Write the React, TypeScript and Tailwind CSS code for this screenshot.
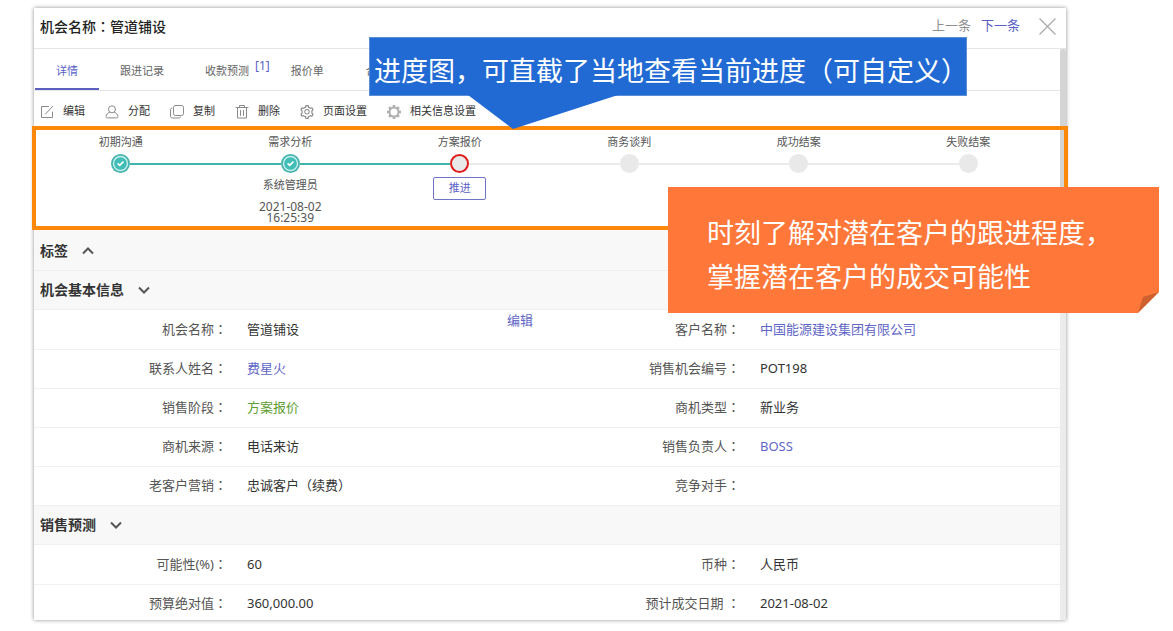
import type { ReactNode } from 'react'
import { useState } from 'react'
import { clsx } from 'clsx'
import { AiOutlineSetting } from 'react-icons/ai'

type Tone = 'text' | 'link' | 'stage'

interface Field {
  label: string
  value?: string
  tone?: Tone
}

interface Step {
  name: string
  state: 'done' | 'current' | 'todo'
  owner?: string
  date?: string
  time?: string
}

const tabs = [
  { name: '详情' },
  { name: '跟进记录' },
  { name: '收款预测', count: 1 },
  { name: '报价单' },
  { name: '合同' },
]

const steps: Step[] = [
  { name: '初期沟通', state: 'done' },
  { name: '需求分析', state: 'done', owner: '系统管理员', date: '2021-08-02', time: '16:25:39' },
  { name: '方案报价', state: 'current' },
  { name: '商务谈判', state: 'todo' },
  { name: '成功结案', state: 'todo' },
  { name: '失败结案', state: 'todo' },
]

const basicInfo: Field[][] = [
  [
    { label: '机会名称', value: '管道铺设' },
    { label: '客户名称', value: '中国能源建设集团有限公司', tone: 'link' },
  ],
  [
    { label: '联系人姓名', value: '费星火', tone: 'link' },
    { label: '销售机会编号', value: 'POT198' },
  ],
  [
    { label: '销售阶段', value: '方案报价', tone: 'stage' },
    { label: '商机类型', value: '新业务' },
  ],
  [
    { label: '商机来源', value: '电话来访' },
    { label: '销售负责人', value: 'BOSS', tone: 'link' },
  ],
  [{ label: '老客户营销', value: '忠诚客户（续费）' }, { label: '竞争对手' }],
]

const forecast: Field[][] = [
  [
    { label: '可能性(%)', value: '60' },
    { label: '币种', value: '人民币' },
  ],
  [
    { label: '预算绝对值', value: '360,000.00' },
    { label: '预计成交日期 ', value: '2021-08-02' },
  ],
]

function Icon({ children }: { children: ReactNode }) {
  return (
    <svg
      viewBox="0 0 14 14"
      className="h-3.5 w-3.5 shrink-0 overflow-visible text-[#8a8a8a]"
      fill="none"
      stroke="currentColor"
      strokeLinecap="round"
      strokeLinejoin="round"
      aria-hidden="true"
    >
      {children}
    </svg>
  )
}

const tools = [
  {
    name: '编辑',
    icon: (
      <Icon>
        <path d="M8.5 1.5h-7v11h11V7M5.5 9l7-7.500" />
      </Icon>
    ),
  },
  {
    name: '分配',
    icon: (
      <Icon>
        <circle cx="7" cy="4.300" r="3.500" />
        <path d="M4.600 7.200C2.500 8 1.300 9.600 1.100 11.500c-.1 1 .3 1.400 1.300 1.400h9.200c1 0 1.400-.4 1.300-1.400-.2-1.900-1.400-3.500-3.500-4.300" />
      </Icon>
    ),
  },
  {
    name: '复制',
    icon: (
      <Icon>
        <rect x="3.500" y=".5" width="10" height="10" rx="2" />
        <path d="M2 3C1 3.200.5 3.800.5 4.700v6.300c0 1.200.8 2 2 2h6.300c1 0 1.600-.4 1.800-1.100" />
      </Icon>
    ),
  },
  {
    name: '删除',
    icon: (
      <Icon>
        <path d="M1 2.500h12M4.500 2.500V.5h5v2M2.500 3v10h9V3M5.500 5.500v5M8.500 5.500v5" />
      </Icon>
    ),
  },
  {
    name: '页面设置',
    icon: <AiOutlineSetting className="-mx-px h-4 w-4 shrink-0 text-[#858585]" />,
  },
  {
    name: '相关信息设置',
    icon: (
      <svg viewBox="0 0 14 14" className="h-3.5 w-3.5 shrink-0 overflow-visible text-[#b0b0b0]" aria-hidden="true">
        <circle cx="7" cy="7" r="4.500" fill="none" stroke="currentColor" strokeWidth="2" />
        {[0, 45, 90, 135, 180, 225, 270, 315].map((a) => (
          <rect key={a} x="5.700" y="0" width="2.600" height="2.600" fill="currentColor" transform={`rotate(${a} 7 7)`} />
        ))}
      </svg>
    ),
  },
]

// Full-width colon set from the TC face, which centres it in its cell
function Colon() {
  return <span className="font-['Noto_Sans_CJK_TC',sans-serif]">：</span>
}

function StepDot({ state }: { state: Step['state'] }) {
  if (state === 'done') {
    return (
      <svg viewBox="0 0 19 19" className="h-[19px] w-[19px] shrink-0" aria-hidden="true">
        <circle cx="9.500" cy="9.500" r="9.500" fill="#45b5ae" />
        <circle cx="9.500" cy="9.500" r="7" fill="#3fbdb6" stroke="#c9efec" strokeWidth="1.400" />
        <path d="M6.600 9.400l2.100 2 3.700-3.800" fill="none" stroke="#fff" strokeWidth="1.600" />
      </svg>
    )
  }
  return (
    <span
      className={clsx(
        'h-[19px] w-[19px] shrink-0 rounded-full bg-[#e9e9e9]',
        state === 'current' && 'border-2 border-[#e01b1b]',
      )}
    />
  )
}

function Progress() {
  return (
    <section className="relative z-10 -mr-2 -ml-0.5 border-4 border-[#fb8808] pr-[11px]">
      <ol className="grid h-24 grid-cols-6 text-[11px] text-[#555]">
        {steps.map((step, i) => (
          <li key={step.name} className="flex flex-col items-center pt-1">
            <span className="leading-4">{step.name}</span>
            <div className="mt-1 flex w-full items-center">
              <span
                className={clsx(
                  'h-0.5 flex-1',
                  i === 0 ? 'bg-transparent' : step.state === 'todo' ? 'bg-[#ebebeb]' : 'bg-[#3fb5ae]',
                )}
              />
              <StepDot state={step.state} />
              <span
                className={clsx(
                  'h-0.5 flex-1',
                  i === steps.length - 1 ? 'bg-transparent' : step.state === 'done' ? 'bg-[#3fb5ae]' : 'bg-[#ebebeb]',
                )}
              />
            </div>
            {step.owner && <span className="mt-1 leading-4">{step.owner}</span>}
            {step.date && (
              <time className="mt-2 text-center text-xs leading-[11px]">
                {step.date}
                <br />
                {step.time}
              </time>
            )}
            {step.state === 'current' && (
              <button className="mt-1 h-[23px] w-[53px] rounded-xs border border-[#6f74c9] text-[#5a5fc8]">推进</button>
            )}
          </li>
        ))}
      </ol>
    </section>
  )
}

function SectionHeader({ title, open, onToggle }: { title: string; open: boolean; onToggle: () => void }) {
  return (
    <h2 className="border-b border-[#efefef] bg-[#f8f8f8] text-sm font-bold text-[#333]">
      <button onClick={onToggle} aria-expanded={open} className="flex h-[38px] w-full items-center gap-3.5 px-1.5 text-left">
        {title}
        <svg viewBox="0 0 12 12" className="h-3 w-3" fill="none" stroke="#555" strokeWidth="2" aria-hidden="true">
          <path d={open ? 'M1 3.500l5 5 5-5' : 'M1 8.500l5-5 5 5'} />
        </svg>
      </button>
    </h2>
  )
}

function FieldValue({ field }: { field: Field }) {
  if (field.tone === 'link') {
    return (
      <a href="#" className="text-[#5f66c6]">
        {field.value}
      </a>
    )
  }
  return <span className={field.tone === 'stage' ? 'text-[#5f9e32]' : 'text-[#333]'}>{field.value}</span>
}

function FieldRows({ rows, editable }: { rows: Field[][]; editable?: boolean }) {
  return (
    <dl className="text-[13px] leading-5">
      {rows.map((row, i) => (
        <div key={i} className="grid h-[39px] grid-cols-2 border-b border-[#f1f1f1] pb-0.5 first:h-10">
          {row.map((field, j) => (
            <div key={field.label} className="flex items-center">
              <dt className="w-[193px] shrink-0 text-right whitespace-pre text-[#555]">
                {field.label}
                <Colon />
              </dt>
              <dd className="ml-5 flex-1">
                <FieldValue field={field} />
              </dd>
              {editable && i === 0 && j === 0 && (
                <button className="mr-3.5 self-start text-[#5f66c6]">编辑</button>
              )}
            </div>
          ))}
        </div>
      ))}
    </dl>
  )
}

function BlueCallout() {
  return (
    <div className="absolute top-[37px] left-[369px] z-20 border border-[#5b8fd6] bg-[#216ad4] pt-2 pr-2 pl-1 text-[27px] leading-[49px] whitespace-nowrap text-white">
      <div className="w-[584px]">进度图，可直截了当地查看当前进度（可自定义）</div>
      <svg viewBox="0 0 150 34" className="absolute top-full left-[98px] h-[34px] w-[150px]" aria-hidden="true">
        <path d="M0 0h150L45 34z" fill="#216ad4" />
      </svg>
    </div>
  )
}

function OrangeCallout() {
  return (
    <div className="absolute top-[187px] left-[668px] z-20 w-[491px] bg-[#ff7739] pt-6 pb-3.5 pl-[39px] text-[27px] leading-[44px] whitespace-nowrap text-white [clip-path:polygon(0_0,100%_0,100%_calc(100%-21px),calc(100%-21px)_100%,0_100%)]">
      <p>时刻了解对潜在客户的跟进程度，</p>
      <p>掌握潜在客户的成交可能性</p>
      <svg viewBox="0 0 21 21" className="absolute right-0 bottom-0 h-[21px] w-[21px]" aria-hidden="true">
        <path d="M0 21L5 5 21 0z" fill="#cc602e" />
      </svg>
    </div>
  )
}

export default function App() {
  const [tab, setTab] = useState('详情')
  const [open, setOpen] = useState({ tags: false, basic: true, forecast: true })

  function toggle(key: keyof typeof open) {
    setOpen((prev) => ({ ...prev, [key]: !prev[key] }))
  }

  return (
    <div className="relative flex h-screen overflow-hidden bg-white pt-2 pr-[107px] pb-[11px] pl-[34px] font-['Noto_Sans','Noto_Sans_CJK_SC',sans-serif]">
      <main className="flex min-w-0 flex-1 flex-col bg-white shadow-[0_0_4px_rgba(0,0,0,0.45)]">
        <header className="flex h-[41px] shrink-0 items-center border-b border-[#e5e5e5] pr-2.5 pb-1 pl-1.5">
          <h1 className="flex-1 text-sm font-medium text-[#222]">
            机会名称
            <Colon />
            管道铺设
          </h1>
          <nav className="flex gap-2.5 text-[13px]">
            <a href="#" className="text-[#8f8f8f]">
              上一条
            </a>
            <a href="#" className="text-[#5a5fc8]">
              下一条
            </a>
          </nav>
          <button aria-label="关闭" className="ml-[19px]">
            <svg viewBox="0 0 17 17" className="h-[17px] w-[17px]" stroke="#aaa" strokeWidth="1.200" aria-hidden="true">
              <path d="M.5.5l16 16M16.500.5l-16 16" />
            </svg>
          </button>
        </header>

        <div className="flex min-h-0 flex-1">
          <div className="flex min-w-0 flex-1 flex-col">
            <nav className="flex h-[42px] shrink-0 border-b border-[#e5e5e5] pl-px text-[11px] text-[#666]">
              {tabs.map((t) => (
                <button
                  key={t.name}
                  onClick={() => setTab(t.name)}
                  className={clsx(
                    'flex shrink-0 items-center border-b-2 pt-1.5',
                    t.count ? 'pl-5' : 'px-[21px]',
                    tab === t.name ? 'border-[#5a5fc0] text-[#5a5fc8]' : 'border-transparent',
                  )}
                >
                  {t.name}
                  {t.count && <span className="mb-3 ml-1.5 text-xs leading-4 text-[#5a5fc8]">[{t.count}]</span>}
                </button>
              ))}
            </nav>

            <div className="flex h-[35px] shrink-0 items-center gap-5 pt-1.5 pl-1.5 text-[11px] text-[#333]">
              {tools.map((t) => (
                <button key={t.name} className="flex items-center gap-[9px]">
                  {t.icon}
                  {t.name}
                </button>
              ))}
            </div>

            <Progress />

            <div className="min-h-0 flex-1 overflow-hidden">
              <div className="bg-[#f8f8f8] pt-0.5">
                <SectionHeader title="标签" open={open.tags} onToggle={() => toggle('tags')} />
              </div>
              <SectionHeader title="机会基本信息" open={open.basic} onToggle={() => toggle('basic')} />
              {open.basic && <FieldRows rows={basicInfo} editable />}
              <SectionHeader title="销售预测" open={open.forecast} onToggle={() => toggle('forecast')} />
              {open.forecast && <FieldRows rows={forecast} />}
            </div>
          </div>

          <div className="w-1.5 bg-[#ececec]">
            <div className="h-2/5 rounded-t-sm bg-[#d4d4d4]" />
          </div>
        </div>
      </main>

      <BlueCallout />
      <OrangeCallout />
    </div>
  )
}
